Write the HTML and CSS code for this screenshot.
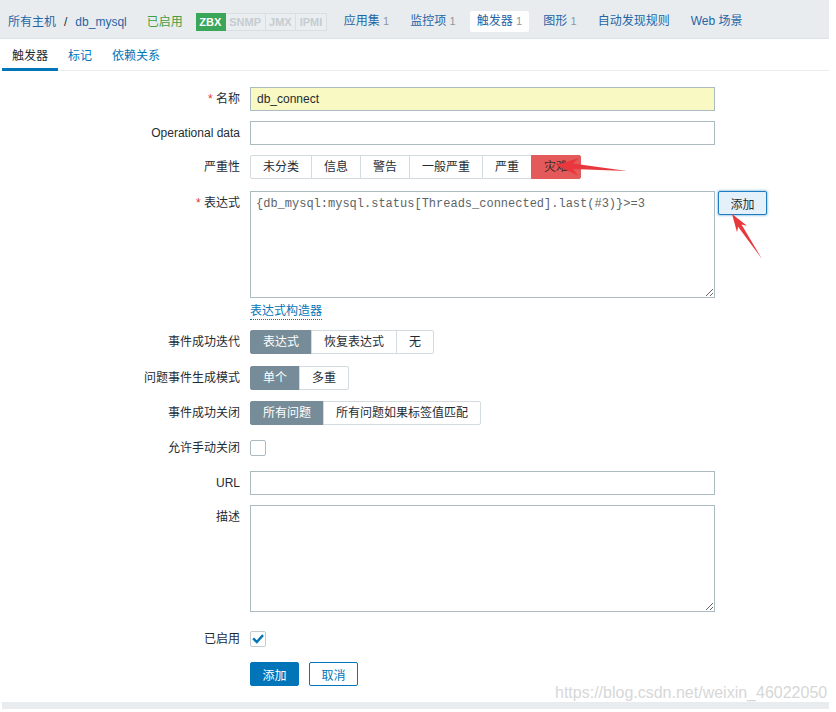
FILE: index.html
```html
<!DOCTYPE html>
<html lang="zh-CN">
<head>
<meta charset="utf-8">
<title>触发器</title>
<link rel="stylesheet" href="styles.css">
</head>
<body>
<div class="page">
  <header class="topnav">
    <span class="link">所有主机</span><span class="sep">/</span><span class="link">db_mysql</span>
    <span class="status-on">已启用</span>
    <span class="badges"><span class="badge zbx">ZBX</span><span class="badge off">SNMP</span><span class="badge off">JMX</span><span class="badge off">IPMI</span></span>
    <nav class="navitems">
      <span class="nav-item">应用集 <span class="cnt">1</span></span>
      <span class="nav-item">监控项 <span class="cnt">1</span></span>
      <span class="nav-item active">触发器 <span class="cnt">1</span></span>
      <span class="nav-item">图形 <span class="cnt">1</span></span>
      <span class="nav-item">自动发现规则</span>
      <span class="nav-item">Web 场景</span>
    </nav>
  </header>

  <div class="tabs">
    <span class="tab active">触发器</span>
    <span class="tab">标记</span>
    <span class="tab">依赖关系</span>
  </div>

  <form class="form">
    <div class="row first">
      <label class="lbl"><span class="req">*</span> 名称</label>
      <input class="txt name" type="text" value="db_connect">
    </div>
    <div class="row">
      <label class="lbl">Operational data</label>
      <input class="txt" type="text" value="">
    </div>
    <div class="row">
      <label class="lbl">严重性</label>
      <div class="seg">
        <span class="opt">未分类</span><span class="opt">信息</span><span class="opt">警告</span><span class="opt">一般严重</span><span class="opt">严重</span><span class="opt disaster">灾难</span>
      </div>
    </div>
    <div class="row mt12">
      <label class="lbl"><span class="req">*</span> 表达式</label>
      <textarea class="area expr">{db_mysql:mysql.status[Threads_connected].last(#3)}&gt;=3</textarea>
      <button type="button" class="btn-add-expr">添加</button>
    </div>
    <div class="row mt6">
      <span class="lbl"></span>
      <span class="builder">表达式构造器</span>
    </div>
    <div class="row">
      <label class="lbl">事件成功迭代</label>
      <div class="seg">
        <span class="opt sel">表达式</span><span class="opt">恢复表达式</span><span class="opt">无</span>
      </div>
    </div>
    <div class="row mt12">
      <label class="lbl">问题事件生成模式</label>
      <div class="seg">
        <span class="opt sel">单个</span><span class="opt">多重</span>
      </div>
    </div>
    <div class="row mt11">
      <label class="lbl">事件成功关闭</label>
      <div class="seg">
        <span class="opt sel">所有问题</span><span class="opt">所有问题如果标签值匹配</span>
      </div>
    </div>
    <div class="row mt11 center">
      <label class="lbl">允许手动关闭</label>
      <span class="check"></span>
    </div>
    <div class="row mt11">
      <label class="lbl">URL</label>
      <input class="txt" type="text" value="">
    </div>
    <div class="row">
      <label class="lbl">描述</label>
      <textarea class="area"></textarea>
    </div>
    <div class="row mt15 center">
      <label class="lbl">已启用</label>
      <span class="check on"><svg width="14" height="14" viewBox="0 0 14 14"><path d="M3 7.2 L5.8 10 L11.2 4" fill="none" stroke="#0275b8" stroke-width="2.4" stroke-linecap="square"/></svg></span>
    </div>
    <div class="row mt11">
      <span class="lbl"></span>
      <button type="button" class="btn primary">添加</button>
      <button type="button" class="btn secondary">取消</button>
    </div>
  </form>
  <div class="bottom-band"></div>
</div>

<svg class="arrows" width="836" height="712" viewBox="0 0 836 712">
  <polygon points="556,165 579,158 573,163.5 627,171 573,168.9 578,175.5" fill="#e8383d"/>
  <polygon points="732,214 747,225.7 741.5,224.5 762,259 738.1,226.7 737,232.3" fill="#e8383d"/>
</svg>
<div class="watermark">https://blog.csdn.net/weixin_46022050</div>
</body>
</html>
```

FILE: styles.css
```css
* { box-sizing: border-box; }

body {
  margin: 0;
  background: #ffffff;
  font-family: "Liberation Sans", "Noto Sans CJK SC", sans-serif;
  font-size: 12px;
  color: #1f2c33;
  position: relative;
  width: 836px;
  height: 712px;
  overflow: hidden;
}

.page {
  width: 829px;
}

/* top navigation */
.topnav {
  height: 39px;
  padding: 5px 0 0 8px;
  background: #e9ecef;
  border-bottom: 1px solid #dde2e6;
  display: flex;
  align-items: center;
  line-height: 16px;
  white-space: nowrap;
}
.link { color: #1f65a5; }
.sep { margin: 0 8px; color: #1f2c33; }
.status-on { color: #429e47; margin-left: 20px; }

.badges {
  display: flex;
  margin-left: 13px;
}
.badge {
  font-size: 11px;
  font-weight: bold;
  line-height: 16px;
  padding: 0 3.5px;
  border: 1px solid #d9dee1;
  border-left: none;
}
.badge.zbx {
  background: #3aa65a;
  border-color: #3aa65a;
  color: #ffffff;
}
.badge.off {
  color: #c4ccd1;
  background: #ebeef0;
}

.navitems {
  display: flex;
  margin-left: 10px;
}
.nav-item {
  color: #1f65a5;
  padding: 0 7px;
  margin-right: 7px;
  height: 21px;
  line-height: 21px;
  border-radius: 2px;
}
.nav-item.active { background: #ffffff; }
.cnt { color: #8a9aa3; font-size: 11px; }

/* tabs */
.tabs {
  margin-left: 2px;
  height: 32px;
  border-bottom: 1px solid #ebeef0;
  display: flex;
  align-items: flex-start;
}
.tab {
  height: 31px;
  padding: 5px 10px 0;
  line-height: 24px;
  color: #0275b8;
}
.tab.active {
  color: #1f2c33;
  height: 32px;
  border-bottom: 3px solid #0275b8;
}

/* form */
.form {
  margin-left: 2px;
  padding-top: 16px;
}
.row {
  display: flex;
  align-items: flex-start;
  margin-top: 10px;
}
.row.first { margin-top: 0; }
.row.mt6 { margin-top: 6px; }
.row.mt11 { margin-top: 11px; }
.row.mt12 { margin-top: 12px; }
.row.mt15 { margin-top: 15px; }
.row.center { align-items: center; height: 24px; }

.lbl {
  width: 238px;
  flex: none;
  text-align: right;
  line-height: 24px;
  margin-right: 10px;
  white-space: nowrap;
}
.req { color: #e33734; }

.txt {
  width: 465px;
  height: 24px;
  border: 1px solid #acbbc2;
  padding: 0 6px;
  font-family: "Liberation Sans", "Noto Sans CJK SC", sans-serif;
  font-size: 12px;
  color: #1f2c33;
  background: #ffffff;
  outline: none;
}
.txt.name { background: #f8f9c3; }

.area {
  width: 465px;
  height: 107px;
  border: 1px solid #acbbc2;
  padding: 5px 5px;
  font-family: "Liberation Mono", monospace;
  font-size: 12px;
  line-height: 14px;
  color: #5d6468;
  background: #ffffff;
  outline: none;
  resize: both;
  margin: 0;
}

.btn-add-expr {
  margin-left: 3px;
  height: 24px;
  width: 49px;
  padding: 0;
  border: 1px solid #1f7cc1;
  border-radius: 2px;
  background: #e5f1fa;
  box-shadow: 0 0 2px 1px rgba(2, 117, 184, 0.35);
  font-family: "Liberation Sans", "Noto Sans CJK SC", sans-serif;
  font-size: 12px;
  color: #1f2c33;
}

.builder {
  color: #0275b8;
  line-height: 15px;
  border-bottom: 1px dotted #0275b8;
}

.seg {
  display: flex;
}
.opt {
  height: 24px;
  line-height: 22px;
  padding: 0 12px;
  border: 1px solid #d3dbdf;
  margin-left: -1px;
  background: #ffffff;
  color: #1f2c33;
  white-space: nowrap;
}
.opt:first-child { margin-left: 0; border-radius: 2px 0 0 2px; }
.opt:last-child { border-radius: 0 2px 2px 0; }
.opt.sel {
  background: #768d99;
  border-color: #768d99;
  color: #ffffff;
}
.opt.disaster {
  background: #e45959;
  border-color: #e45959;
  color: #3a2a2a;
}

.check {
  width: 16px;
  height: 16px;
  border: 1px solid #acbbc2;
  border-radius: 2px;
  background: #ffffff;
  display: flex;
  align-items: center;
  justify-content: center;
}
.check.on { border-color: #c3ccd1; }

.btn {
  height: 24px;
  padding: 0;
  width: 49px;
  border-radius: 2px;
  font-family: "Liberation Sans", "Noto Sans CJK SC", sans-serif;
  font-size: 12px;
}
.btn.primary {
  background: #0275b8;
  border: 1px solid #0275b8;
  color: #ffffff;
}
.btn.secondary {
  margin-left: 10px;
  background: #ffffff;
  border: 1px solid #0275b8;
  color: #0275b8;
}

.bottom-band {
  margin: 16px 0 0 2px;
  height: 7px;
  background: #e9ecef;
}

/* overlays */
.arrows {
  position: absolute;
  left: 0;
  top: 0;
  pointer-events: none;
}
.watermark {
  position: absolute;
  left: 555px;
  top: 684px;
  font-family: "Liberation Sans", sans-serif;
  font-size: 16px;
  line-height: 18px;
  color: #d7d7d7;
  white-space: nowrap;
}
```
